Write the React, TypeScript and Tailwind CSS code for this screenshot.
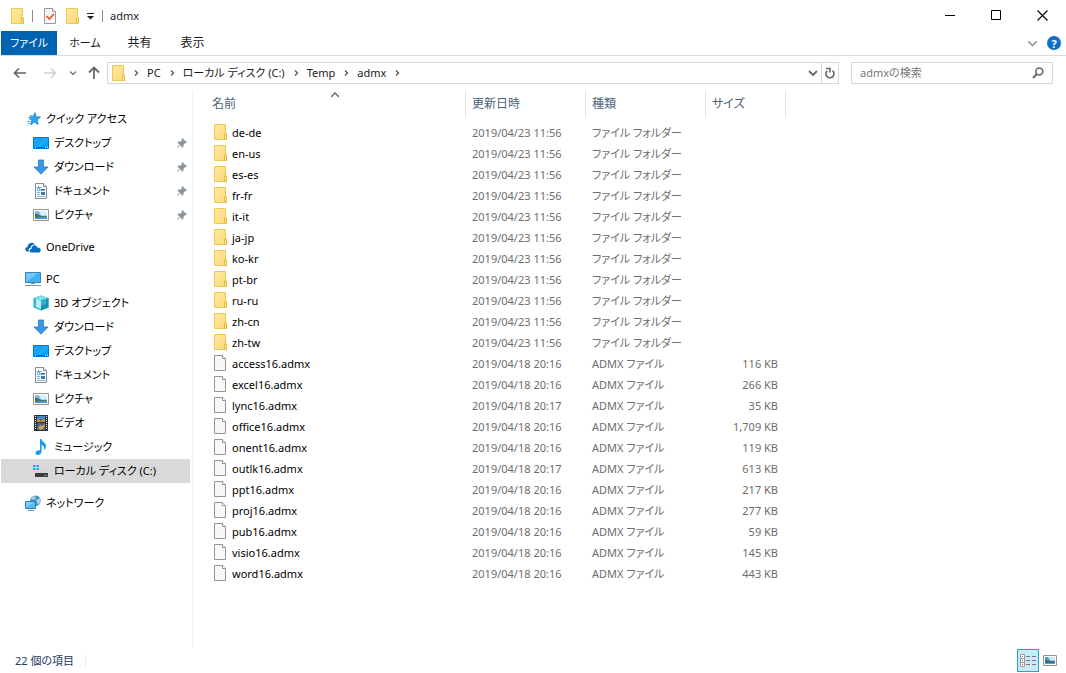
import type { ReactNode } from "react";

type IconProps = { className?: string };

function Svg({ children, className = "" }: { children: ReactNode; className?: string }) {
  return (
    <svg viewBox="0 0 16 16" width="16" height="16" aria-hidden="true" className={`shrink-0 ${className}`}>
      {children}
    </svg>
  );
}

function FolderIcon({ className }: IconProps) {
  return (
    <Svg className={className}>
      <defs>
        <linearGradient id="folder" x1="0" y1="0" x2="1" y2="1">
          <stop offset="0" stopColor="#ffe9a2" />
          <stop offset="1" stopColor="#fcd978" />
        </linearGradient>
      </defs>
      <path d="M2.5.5h11v9.500h1v5.500h-12z" fill="url(#folder)" stroke="#ecc94f" />
      <path d="M12.500 15.500v-5.500h2v5.500z" fill="#ffe596" stroke="#e5bd3d" />
    </Svg>
  );
}

function FileIcon({ className }: IconProps) {
  return (
    <Svg className={className}>
      <path d="M2.500.5h8l3 3v12h-11z" fill="#f8f8f8" stroke="#949494" />
      <path d="M10.500.5v3h3" fill="#fff" stroke="#949494" />
    </Svg>
  );
}

function PropertiesIcon() {
  return (
    <Svg>
      <path d="M2.500.5h8l3 3v12h-11z" fill="#f4f6fa" stroke="#9a9a9a" />
      <path d="M10.500.5v3h3" fill="#fff" stroke="#9a9a9a" />
      <path d="M4.500 8l2.800 3 4.700-5" fill="none" stroke="#f0501e" strokeWidth="1.700" />
    </Svg>
  );
}

function StarIcon() {
  return (
    <Svg>
      <path d="M9.800 1.500l1.500 4.200 4.200.3-3.300 2.900 1 4.600-3.700-2.400-3.900 2.700 1.300-4.700L4 6l4.300-.3z" fill="#2aa5ee" stroke="#1583cd" strokeWidth=".8" />
      <path d="M5 4.500h2.500M3 6.500h2M4 8.500h2M2 10.500h3.500M3 12.500h2" stroke="#54b6f0" />
    </Svg>
  );
}

function DesktopIcon() {
  return (
    <Svg>
      <path d="M.5 2.500h15v11H.5z" fill="#18a3fb" stroke="#0877c9" />
      <path d="M1 12.500h14" stroke="#0565b0" />
      <path d="M2 12.500h1M12 12.500h1M14 12.500h1" stroke="#c9eaff" />
      <path d="M5 12L14 3" stroke="#38b4ff" />
    </Svg>
  );
}

function DownloadIcon() {
  return (
    <Svg>
      <path d="M5.500 1h5v7H15l-7 7.200L1 8h4.500z" fill="#3b96e4" stroke="#2b7cc9" strokeWidth=".8" />
    </Svg>
  );
}

function DocumentIcon() {
  return (
    <Svg>
      <path d="M2.500.5h8l3 3v12h-11z" fill="#fff" stroke="#8c8c8c" />
      <path d="M10.500.5v3h3" fill="#eee" stroke="#8c8c8c" />
      <path d="M7 4.500h2M4 7.500h8M4 9.500h3M4 11.500h3M4 13.500h8" stroke="#7fb2d8" />
      <path d="M4 6.500l1.500-3L7 6.500M8 6.500h4" fill="none" stroke="#1c7fc4" />
      <path d="M8 9h4v3H8z" fill="#347fb5" />
    </Svg>
  );
}

function PictureIcon() {
  return (
    <Svg>
      <path d="M.5 2.500h15v11H.5z" fill="#fff" stroke="#949494" />
      <path d="M2 4h12v8H2z" fill="#7fbdf0" />
      <path d="M6 4h8v4.500H8z" fill="#d9effc" />
      <path d="M2 6.500c3 0 4 2 7 2.500l5 .5V12H2z" fill="#3f7462" />
      <path d="M2 10.500c4-.6 8-.6 12-.5v2H2z" fill="#4a92cc" />
    </Svg>
  );
}

function OneDriveIcon() {
  return (
    <Svg>
      <path d="M2 12.500C-.8 11.500 0 8 2.500 8 2.500 4 7.500 2 10 5.500 7 5 5.500 7.500 5.800 8.800 3.500 9 3 11.500 4.500 12.500z" fill="#0a6cc2" />
      <path d="M6 13.500c-2-.2-2-3.500.7-3.800C6.500 6 11 5 12.200 8.500c3.500-.6 4.800 3.800 2 5z" fill="#0a6cc2" />
    </Svg>
  );
}

function ComputerIcon() {
  return (
    <Svg>
      <path d="M.5 1.500h15v10H.5z" fill="#3fb0f0" stroke="#3b83b2" />
      <path d="M1 11L13 2H1z" fill="#74c8f8" />
      <path d="M6 12.500h4" stroke="#8195a5" />
      <path d="M0 14.500h16" stroke="#7d98aa" />
    </Svg>
  );
}

function CubeIcon() {
  return (
    <Svg>
      <path d="M8 .5L15.500 3v9.500L8 15.500.5 12.500V3z" fill="#2bb8d0" />
      <path d="M8 .5L15.500 3 8 5.500.5 3z" fill="#7fe0ea" />
      <path d="M3 4l5 1.700L13 4v2L8 8v6l-5-2z" fill="#b5eef4" />
      <path d="M8 5.500L15.500 3v9.500L8 15.500z" fill="#1596b2" />
      <path d="M8 6l5-1.700v5L8 11z" fill="#4fc8dc" opacity=".5" />
    </Svg>
  );
}

function VideoIcon() {
  return (
    <Svg>
      <path d="M1 0h14v16H1z" fill="#303030" />
      <path d="M4 1h8v6H4z" fill="#3987d6" />
      <path d="M4 8h8v7H4z" fill="#2e67b6" />
      <path d="M4 4l3 1 1-2 2 2 2-1v3H4z" fill="#c49a37" />
      <path d="M5 13l2-3 2 1 2-2 1 2-2 3-3 1z" fill="#d3a03a" />
      <path d="M7 4h2v2H7zM6 9h2v1H6z" fill="#b8422e" />
      <path d="M2.500 1v14M13.500 1v14" stroke="#eee" strokeDasharray="1 1" />
    </Svg>
  );
}

function MusicIcon() {
  return (
    <Svg>
      <path d="M7 0h1.500c.2 3 4.500 3.500 4.500 7 0 2-1 3-1.800 4 .5-3-.7-4.500-2.700-5v6.500c0 4-6 4.500-6 1.500 0-2.300 2.500-3.400 4.500-2.600z" fill="#139bf0" />
    </Svg>
  );
}

function DriveIcon() {
  return (
    <Svg>
      <path d="M0 2h2.500v2H0zM3.500 2H6v2H3.500zM0 5h2.500v2H0zM3.500 5H6v2H3.500z" fill="#18aaf0" />
      <path d="M4 8h9l1.500 2h-12z" fill="#d2d2d2" />
      <path d="M2 10h13v4H2z" fill="#3c3c3c" />
      <path d="M11.500 12.500h2" stroke="#4fe56b" />
    </Svg>
  );
}

function NetworkIcon() {
  return (
    <Svg>
      <circle cx="10.500" cy="5.800" r="5.300" fill="#3d8cc4" />
      <path d="M7 2l3-1 1 2-2 2-3-1zM11 5l4-2 1 4-3 3z" fill="#a9cfe6" />
      <path d="M.5 6.500h10v7H.5z" fill="#59bbf1" stroke="#2e7fb0" />
      <path d="M1 7h8l-8 5z" fill="#82d0f9" />
      <path d="M3 15.500h6" stroke="#7393a6" />
    </Svg>
  );
}

function PinIcon() {
  return (
    <svg viewBox="0 0 10 10" width="10" height="10" role="img" aria-label="ピン留め" className="shrink-0">
      <path d="M5.500 0L10 4.500l-1 .8-.8-.2L6.500 7l-.1 2-.9.8L3 7.200.6 9.800H0v-.6L2.700 6.800.3 4.500l.8-.9 2 .1L5 2 4.700.9z" fill="#8b969f" />
    </svg>
  );
}

function Chevron({ direction, className }: { direction: "right" | "down" | "up"; className: string }) {
  const paths = { right: "M3 1.500l2.500 2.500L3 6.500", down: "M1 2.500l3 3 3-3", up: "M0 6l4-4 4 4" };
  return (
    <svg viewBox="0 0 8 8" aria-hidden="true" className={`shrink-0 ${className}`}>
      <path d={paths[direction]} fill="none" stroke="currentColor" strokeWidth="1.300" />
    </svg>
  );
}

type NavItem = { label: string; icon: ReactNode; pinned?: boolean; selected?: boolean };
type NavGroup = { root: NavItem; children: NavItem[] };

const navGroups: NavGroup[] = [
  {
    root: { label: "クイック アクセス", icon: <StarIcon /> },
    children: [
      { label: "デスクトップ", icon: <DesktopIcon />, pinned: true },
      { label: "ダウンロード", icon: <DownloadIcon />, pinned: true },
      { label: "ドキュメント", icon: <DocumentIcon />, pinned: true },
      { label: "ピクチャ", icon: <PictureIcon />, pinned: true },
    ],
  },
  { root: { label: "OneDrive", icon: <OneDriveIcon /> }, children: [] },
  {
    root: { label: "PC", icon: <ComputerIcon /> },
    children: [
      { label: "3D オブジェクト", icon: <CubeIcon /> },
      { label: "ダウンロード", icon: <DownloadIcon /> },
      { label: "デスクトップ", icon: <DesktopIcon /> },
      { label: "ドキュメント", icon: <DocumentIcon /> },
      { label: "ピクチャ", icon: <PictureIcon /> },
      { label: "ビデオ", icon: <VideoIcon /> },
      { label: "ミュージック", icon: <MusicIcon /> },
      { label: "ローカル ディスク (C:)", icon: <DriveIcon />, selected: true },
    ],
  },
  { root: { label: "ネットワーク", icon: <NetworkIcon /> }, children: [] },
];

const folders = ["de-de", "en-us", "es-es", "fr-fr", "it-it", "ja-jp", "ko-kr", "pt-br", "ru-ru", "zh-cn", "zh-tw"];

const files = [
  { name: "access16.admx", time: "20:16", size: "116 KB" },
  { name: "excel16.admx", time: "20:16", size: "266 KB" },
  { name: "lync16.admx", time: "20:17", size: "35 KB" },
  { name: "office16.admx", time: "20:16", size: "1,709 KB" },
  { name: "onent16.admx", time: "20:16", size: "119 KB" },
  { name: "outlk16.admx", time: "20:17", size: "613 KB" },
  { name: "ppt16.admx", time: "20:16", size: "217 KB" },
  { name: "proj16.admx", time: "20:16", size: "277 KB" },
  { name: "pub16.admx", time: "20:16", size: "59 KB" },
  { name: "visio16.admx", time: "20:16", size: "145 KB" },
  { name: "word16.admx", time: "20:16", size: "443 KB" },
];

const rows = [
  ...folders.map((name) => ({ name, folder: true, date: "2019/04/23 11:56", type: "ファイル フォルダー", size: "" })),
  ...files.map((f) => ({ name: f.name, folder: false, date: `2019/04/18 ${f.time}`, type: "ADMX ファイル", size: f.size })),
];

function NavLink({ item, child }: { item: NavItem; child?: boolean }) {
  return (
    <li className="pr-[2px] pl-px">
      <a
        href="#"
        aria-current={item.selected ? "location" : undefined}
        className={`flex h-6 items-center gap-[5px] pr-[3px] whitespace-nowrap ${child ? "pl-8" : "pl-6"} ${item.selected ? "bg-[#d9d9d9]" : ""}`}
      >
        {item.icon}
        <span className="flex-1">{item.label}</span>
        {item.pinned && <PinIcon />}
      </a>
    </li>
  );
}

function TitleBar() {
  return (
    <header className="flex h-[31px] shrink-0 items-center pr-px">
      <FolderIcon className="ml-[9px]" />
      <span className="ml-[7px] h-3 w-px bg-[#8a8a8a]" />
      <div className="ml-[9px] flex items-center gap-[6px]">
        <button type="button" aria-label="プロパティ"><PropertiesIcon /></button>
        <button type="button" aria-label="新しいフォルダー"><FolderIcon /></button>
        <button type="button" aria-label="クイック アクセス ツール バーのカスタマイズ">
          <svg viewBox="0 0 8 8" width="8" height="8" aria-hidden="true">
            <path d="M1 1.500h7" stroke="#222" />
            <path d="M1 4h7L4.500 7.500z" fill="#222" />
          </svg>
        </button>
      </div>
      <span className="ml-[8px] h-3 w-px bg-[#8a8a8a]" />
      <h1 className="ml-[7px] flex-1">admx</h1>
      <button type="button" aria-label="最小化" className="flex h-full w-[46px] items-center justify-center">
        <svg viewBox="0 0 11 11" width="11" height="11" aria-hidden="true"><path d="M0 5.500h10" stroke="#000" /></svg>
      </button>
      <button type="button" aria-label="最大化" className="flex h-full w-[46px] items-center justify-center">
        <svg viewBox="0 0 11 11" width="11" height="11" aria-hidden="true"><path d="M.5.5h9v9h-9z" fill="none" stroke="#000" /></svg>
      </button>
      <button type="button" aria-label="閉じる" className="flex h-full w-[46px] items-center justify-center">
        <svg viewBox="0 0 11 11" width="11" height="11" aria-hidden="true"><path d="M.5.5l10 10M10.500.5l-10 10" stroke="#000" strokeWidth="1.100" /></svg>
      </button>
    </header>
  );
}

function RibbonTabs() {
  return (
    <nav aria-label="リボン" className="flex h-[25px] shrink-0 items-stretch border-b border-[#dadbdc] pl-px">
      <button type="button" className="w-14 bg-[#0063b1] text-white">ファイル</button>
      <button type="button" className="w-14">ホーム</button>
      <button type="button" className="w-[53px] text-[12px]">共有</button>
      <button type="button" className="w-[53px] text-[12px]">表示</button>
      <div className="ml-auto flex items-center gap-[9px] pr-[5px]">
        <button type="button" aria-label="リボンの展開" className="text-[#9a9a9a]">
          <Chevron direction="down" className="size-[11px]" />
        </button>
        <button type="button" aria-label="ヘルプ" className="flex size-[14px] items-center justify-center rounded-full bg-[#0f6fc8] text-[11px] leading-none font-bold text-white">?</button>
      </div>
    </nav>
  );
}

function AddressBar() {
  return (
    <div className="flex h-[35px] shrink-0 items-center pr-[13px] pb-px pl-[13px]">
      <button type="button" aria-label="戻る">
        <svg viewBox="0 0 14 12" width="14" height="12" aria-hidden="true"><path d="M13 6H1.500M6 1.500L1.500 6 6 10.500" fill="none" stroke="#666" strokeWidth="1.700" /></svg>
      </button>
      <button type="button" aria-label="進む" className="ml-4">
        <svg viewBox="0 0 14 12" width="14" height="12" aria-hidden="true"><path d="M1 6h11.500M8 1.500L12.500 6 8 10.500" fill="none" stroke="#d2d2d2" strokeWidth="1.700" /></svg>
      </button>
      <button type="button" aria-label="最近表示した場所" className="ml-3 text-[#777]"><Chevron direction="down" className="size-2" /></button>
      <button type="button" aria-label="上へ" className="ml-[11px]">
        <svg viewBox="0 0 12 14" width="12" height="14" aria-hidden="true"><path d="M6 13V2M1 6.500L6 1.500l5 5" fill="none" stroke="#666" strokeWidth="1.800" /></svg>
      </button>
      <div className="ml-[7px] flex h-[22px] min-w-0 flex-1 items-center border border-[#d9d9d9]">
        <FolderIcon className="ml-[2px]" />
        <nav aria-label="パス" className="flex min-w-0 flex-1 items-center gap-[7px] overflow-hidden pl-[6px] whitespace-nowrap">
          {["PC", "ローカル ディスク (C:)", "Temp", "admx"].map((crumb) => (
            <span key={crumb} className="flex items-center gap-[7px]">
              <Chevron direction="right" className="size-2 text-[#555]" />
              <a href="#">{crumb}</a>
            </span>
          ))}
          <Chevron direction="right" className="size-2 text-[#555]" />
        </nav>
        <button type="button" aria-label="以前の場所" className="flex h-full w-4 items-center justify-center text-[#666]">
          <svg viewBox="0 0 10 8" width="10" height="8" aria-hidden="true"><path d="M1 2l4 4 4-4" fill="none" stroke="currentColor" strokeWidth="1.800" /></svg>
        </button>
        <button type="button" aria-label="最新の情報に更新" className="flex h-full w-[17px] items-center justify-center border-l border-[#d9d9d9]">
          <svg viewBox="0 0 10 12" width="10" height="12" aria-hidden="true">
            <path d="M2.200 3.800A4 4 0 1 0 7.500 3.600" fill="none" stroke="#666" strokeWidth="1.600" />
            <path d="M1 1.500h4v4" fill="none" stroke="#666" strokeWidth="1.600" />
          </svg>
        </button>
      </div>
      <label className="ml-3 flex h-[22px] w-[202px] items-center border border-[#d9d9d9] pr-2 pl-2">
        <input type="search" aria-label="admxの検索" placeholder="admxの検索" className="min-w-0 flex-1 outline-none placeholder:text-[#767676]" />
        <svg viewBox="0 0 12 12" width="12" height="12" aria-hidden="true">
          <circle cx="7.300" cy="4.500" r="3.500" fill="none" stroke="#666" strokeWidth="1.600" />
          <path d="M4.800 7L1 11" stroke="#666" strokeWidth="2" />
        </svg>
      </label>
    </div>
  );
}

function HeaderCell({ label, first }: { label: string; first?: boolean }) {
  return (
    <th scope="col" aria-sort={first ? "ascending" : undefined} className="p-0 pb-[5px] text-left text-[12px] font-normal">
      <div className={`relative flex h-[26px] items-center border-r border-[#e5e5e5] text-[#4c607a] ${first ? "pl-[19px]" : "pl-[6px]"}`}>
        {label}
        {first && <Chevron direction="up" className="absolute top-0 left-[138px] size-2 text-[#666]" />}
      </div>
    </th>
  );
}

function FileTable() {
  return (
    <table className="w-[593px] table-fixed">
      <colgroup>
        <col className="w-[273px]" />
        <col className="w-[120px]" />
        <col className="w-[120px]" />
        <col className="w-[80px]" />
      </colgroup>
      <thead>
        <tr>
          <HeaderCell label="名前" first />
          <HeaderCell label="更新日時" />
          <HeaderCell label="種類" />
          <HeaderCell label="サイズ" />
        </tr>
      </thead>
      <tbody className="whitespace-nowrap text-[#6d6d6d]">
        {rows.map((row) => (
          <tr key={row.name} className="h-[21px]">
            <td className="p-0 pl-[19px] text-black">
              <div className="flex h-[21px] items-center gap-1">
                {row.folder ? <FolderIcon className="mb-px" /> : <FileIcon className="mb-px" />}
                {row.name}
              </div>
            </td>
            <td className="p-0 pl-[6px]">{row.date}</td>
            <td className="p-0 pl-[6px]">{row.type}</td>
            <td className="p-0 pr-2 text-right">{row.size}</td>
          </tr>
        ))}
      </tbody>
    </table>
  );
}

function StatusBar() {
  return (
    <footer className="flex h-[25px] shrink-0 items-center pr-2 pl-[15px] text-[#1e3a5f]">
      <span>22 個の項目</span>
      <span className="ml-[11px] h-3 w-px bg-[#ececec]" />
      <div className="ml-auto flex items-center gap-[3px]">
        <button type="button" aria-label="詳細" aria-pressed="true" className="flex h-[23px] w-[22px] items-center justify-center border border-[#2f9ccf] bg-[#cce8f6]">
          <svg viewBox="0 0 16 13" width="16" height="13" aria-hidden="true">
            <path d="M.5.5h4v12h-4zM.5 4.500h4M.5 8.500h4" fill="#fff" stroke="#999" />
            <path d="M2 2.500h1M2 6.500h1" stroke="#4b7b9d" />
            <path d="M2 10.500h1" stroke="#d33" />
            <path d="M6 2.500h4M12 2.500h4M6 6.500h4M12 6.500h4M6 10.500h4M12 10.500h4" stroke="#777" />
          </svg>
        </button>
        <button type="button" aria-label="大アイコン" className="pb-px">
          <svg viewBox="0 0 14 11" width="14" height="11" aria-hidden="true" className="mx-px">
            <path d="M.5.5h13v10H.5z" fill="#fff" stroke="#949494" />
            <path d="M2 2h10v7H2z" fill="#4f9be6" />
            <path d="M5 2h7v3.500H7z" fill="#cfe8fb" />
            <path d="M2 5c3-.5 5 1.500 10 1.500V8H2z" fill="#3f7462" />
          </svg>
        </button>
      </div>
    </footer>
  );
}

export default function App() {
  return (
    <div className="flex h-screen flex-col overflow-hidden bg-white font-['Noto_Sans','Noto_Sans_CJK_JP',sans-serif] text-[11px] leading-4 text-[#1a1a1a] [font-feature-settings:'palt']">
      <TitleBar />
      <RibbonTabs />
      <AddressBar />
      <div className="flex min-h-0 flex-1">
        <nav aria-label="ナビゲーション ウィンドウ" className="flex w-[193px] shrink-0 flex-col gap-2 overflow-hidden border-r border-[#f2f2f2] pt-4 text-black">
          {navGroups.map((group) => (
            <ul key={group.root.label}>
              <NavLink item={group.root} />
              {group.children.map((item) => (
                <NavLink key={item.label} item={item} child />
              ))}
            </ul>
          ))}
        </nav>
        <main className="min-w-0 flex-1 overflow-hidden">
          <FileTable />
        </main>
      </div>
      <StatusBar />
    </div>
  );
}
